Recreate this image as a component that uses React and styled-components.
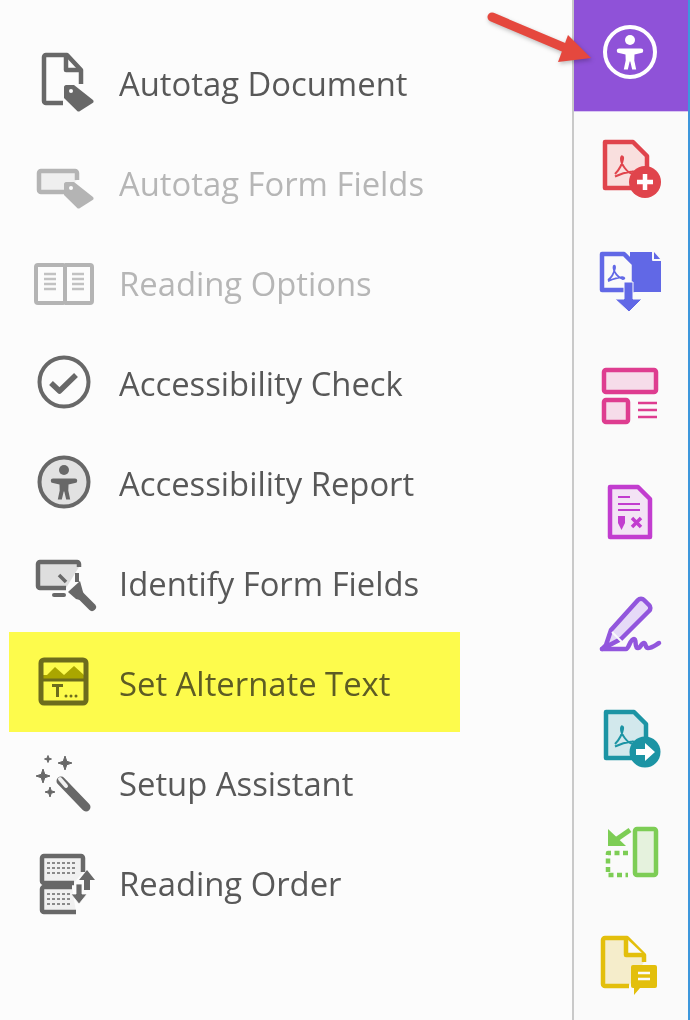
import React from 'react'
import styled, { createGlobalStyle } from 'styled-components'

const GlobalStyle = createGlobalStyle`
  html, body { margin: 0; padding: 0; background: #fcfcfc; }
`

// the reference is an upscaled capture, everything is slightly soft
const Page = styled.div`
  position: relative;
  display: flex;
  width: 690px;
  height: 1020px;
  overflow: hidden;
  background: #fcfcfc;
  font-family: "Open Sans", "Noto Sans", sans-serif;
  filter: blur(0.45px);
`

const Menu = styled.ul`
  flex: 1;
  list-style: none;
  margin: 0;
  padding: 32px 112px 0 9px;
`

const MenuRow = styled.li`
  display: flex;
  align-items: center;
  gap: 19px;
  height: 100px;
  box-sizing: border-box;
  padding: 2px 0 0 21px;
  background: ${(p) => (p.$highlight ? '#fdfb4c' : 'transparent')};
  color: ${(p) => (p.$disabled ? '#b6b6b6' : p.$highlight ? '#5d5c24' : '#585858')};
  font-size: 32.8px;
  white-space: nowrap;
`

const Rail = styled.nav`
  flex: none;
  width: 114px;
  border-left: 2px solid #c9c9c9;
  border-right: 2px solid #3d97dc;
  background: #fafafa;
`

const RailTab = styled.div`
  display: flex;
  align-items: center;
  justify-content: center;
  height: 114px;
`

const ActiveTab = styled(RailTab)`
  height: 112px;
  box-sizing: border-box;
  padding-bottom: 6px;
  background: #8f52d8;
  border-bottom: 1px solid #d9c6f2;
`

const Svg = styled.svg`
  display: block;
  flex: none;
  width: 70px;
  height: 70px;
  stroke-linejoin: round;
`

const Arrow = styled.svg`
  position: absolute;
  left: 480px;
  top: 5px;
  width: 120px;
  height: 70px;
  filter: drop-shadow(1px 2px 2px rgba(0, 0, 0, 0.25));
`

const Icon = ({ children }) => <Svg viewBox="0 0 70 70">{children}</Svg>

const GRAY = '#686868'
const LIGHT = '#b4b4b4'

const Figure = ({ color }) => (
  <g fill={color}>
    <circle cx="34" cy="22" r="5" />
    <path d="M23 30.5h22a2 2 0 0 1 0 4.500l-6.500 1.500-.2 6 1.900 9h-4l-1.900-8h-.6l-1.900 8h-4l1.900-9-.2-6-6.500-1.500a2 2 0 0 1 0-4.500z" />
  </g>
)

const Tag = ({ color, y }) => (
  <g transform={`translate(0 ${y})`}>
    <path d="M36 0h8l19 15c.8.800.8 2 0 2.800L50 26c-.8.800-2 .800-2.800 0L34 13V2c0-1 1-2 2-2z" fill={color} />
    <circle cx="41" cy="6" r="2" fill="#fcfcfc" />
  </g>
)

const AutotagDocIcon = () => (
  <Icon>
    <path d="M33 55H16a2 2 0 0 1-2-2V9a2 2 0 0 1 2-2h21l14 15v14" fill="none" stroke={GRAY} strokeWidth="4.500" />
    <path d="M36 7v15h15" fill="none" stroke={GRAY} strokeWidth="4.500" />
    <Tag color={GRAY} y={37} />
  </Icon>
)

const AutotagFormIcon = () => (
  <Icon>
    <path d="M34 44H11a2 2 0 0 1-2-2V25a2 2 0 0 1 2-2h34a2 2 0 0 1 2 2v7" fill="#efefef" stroke={LIGHT} strokeWidth="4.500" />
    <Tag color={LIGHT} y={34} />
  </Icon>
)

const ReadingOptionsIcon = () => (
  <Icon>
    <path d="M33 17H8a2 2 0 0 0-2 2v34a2 2 0 0 0 2 2h25a2 2 0 0 0 2-2V19a2 2 0 0 0-2-2z" fill="none" stroke={LIGHT} strokeWidth="4" />
    <path d="M35 17h25a2 2 0 0 1 2 2v34a2 2 0 0 1-2 2H35" fill="none" stroke={LIGHT} strokeWidth="4" />
    <path d="M14 26h12M14 31h12M14 36h12M14 41h12M42 26h12M42 31h12M42 36h12M42 41h12" stroke="#c2c2c2" strokeWidth="2.500" />
  </Icon>
)

const CheckIcon = () => (
  <Icon>
    <circle cx="34" cy="34" r="24.500" fill="none" stroke={GRAY} strokeWidth="4" />
    <path d="M21 35l8.500 8L46 27" fill="none" stroke={GRAY} strokeWidth="5.500" />
  </Icon>
)

const ReportIcon = () => (
  <Icon>
    <circle cx="34" cy="34" r="24.500" fill="#e2e2e2" stroke={GRAY} strokeWidth="4" />
    <Figure color={GRAY} />
  </Icon>
)

const IdentifyIcon = () => (
  <Icon>
    <path d="M36 40H10a2 2 0 0 1-2-2V16a2 2 0 0 1 2-2h37a2 2 0 0 1 2 2v3" fill="#dedede" stroke={GRAY} strokeWidth="4.500" />
    <path d="M47 25v9" stroke={GRAY} strokeWidth="4" />
    <path d="M24 47h10" stroke={GRAY} strokeWidth="4" strokeLinecap="round" />
    <path d="M29 27l7 7" stroke={GRAY} strokeWidth="3.500" />
    <path d="M38 44l12-11 3 11 1 4-4 4-4-1z" fill={GRAY} />
    <path d="M50 47l12 12" stroke={GRAY} strokeWidth="8" strokeLinecap="round" />
  </Icon>
)

const AltTextIcon = () => (
  <Icon>
    <path d="M13 31v-4h4l8-8 9 8 10-9 10 9v4z" fill="#aaa600" />
    <rect x="11" y="12" width="45" height="43" rx="3" fill="none" stroke="#6d6c1d" strokeWidth="5" />
    <path d="M13 32h41" stroke="#6d6c1d" strokeWidth="3" />
    <path d="M22 36h11v3h-4v10h-3V39h-4z" fill="#6d6c1d" />
    <g fill="#6d6c1d">
      <circle cx="36" cy="48" r="1.500" />
      <circle cx="41" cy="48" r="1.500" />
      <circle cx="46" cy="48" r="1.500" />
    </g>
  </Icon>
)

const Sparkle = ({ x, y, s }) => (
  <path d={`M${x} ${y - s}l${s * 0.25} ${s * 0.75} ${s * 0.75} ${s * 0.25} ${-s * 0.75} ${s * 0.25} ${-s * 0.25} ${s * 0.75} ${-s * 0.25} ${-s * 0.75} ${-s * 0.75} ${-s * 0.25} ${s * 0.75} ${-s * 0.25}z`} fill={GRAY} stroke={GRAY} />
)

const WandIcon = () => (
  <Icon>
    <Sparkle x={35} y={15} s={7} />
    <Sparkle x={13} y={28} s={7} />
    <Sparkle x={20} y={44} s={5} />
    <Sparkle x={18} y={11} s={3.500} />
    <path d="M31 33l25 26" stroke={GRAY} strokeWidth="9" strokeLinecap="round" />
    <path d="M30 31l6 7" stroke="#f2f2f2" strokeWidth="4" strokeLinecap="round" />
  </Icon>
)

const Keys = ({ x, y, w }) => (
  <g stroke="#8a8a8a" strokeWidth="1.800" strokeDasharray="3 2">
    <path d={`M${x} ${y}h${w}M${x} ${y + 5}h${w}M${x} ${y + 10}h${w}`} />
  </g>
)

const ReadingOrderIcon = () => (
  <Icon>
    <path d="M44 35H14a2 2 0 0 1-2-2V10a2 2 0 0 1 2-2h37a2 2 0 0 1 2 2v14" fill="#f0f0f0" stroke={GRAY} strokeWidth="4.500" />
    <path d="M46 64H14a2 2 0 0 1-2-2V41a2 2 0 0 1 2-2h28" fill="#f0f0f0" stroke={GRAY} strokeWidth="4.500" />
    <Keys x={17} y={15} w={30} />
    <Keys x={17} y={46} w={24} />
    <path d="M57 22l8 10h-5v10h-6V32h-5z" fill={GRAY} />
    <path d="M46 36h6v10h5l-8 10-8-10h5z" fill={GRAY} stroke="#fcfcfc" strokeWidth="0.800" />
  </Icon>
)

const pdfMark = 'M19 40c3-3 7-9 8-15 .5-3-2-4-2 0 0 5 6 14 12 15 4 .5 3-3-1-2.500-5 .5-11 2-17 5'

const AccessIcon = () => (
  <Icon>
    <circle cx="34" cy="34" r="25" fill="none" stroke="#fff" strokeWidth="4" />
    <Figure color="#fff" />
  </Icon>
)

const CreatePdfIcon = () => (
  <Icon>
    <path d="M9 8h28l14 14v32H9z" fill="#f9dfde" stroke="#e0444c" strokeWidth="4.500" />
    <path d={pdfMark} fill="none" stroke="#e0444c" strokeWidth="2" />
    <circle cx="49" cy="48" r="16" fill="#e0444c" />
    <path d="M49 40v16M41 48h16" stroke="#fff" strokeWidth="4.500" />
  </Icon>
)

const CombineIcon = () => (
  <Icon>
    <path d="M34 4h24l7 8v32H34z" fill="#6168e6" />
    <path d="M57 4v8h8" fill="none" stroke="#fafafa" strokeWidth="2" />
    <path d="M6 6h22l10 10v26H6z" fill="#fafafa" stroke="#6168e6" strokeWidth="4.500" />
    <path d="M12 32c3-2 6-7 7-12 .3-3-1.500-3-1.500 0 0 4 5 10 9 11 3 .3 2-2-.5-1.800-4 .3-8 1.500-14 4" fill="none" stroke="#6168e6" strokeWidth="1.800" />
    <path d="M28 34h9v17h9L33 64 19 51h9z" fill="#6168e6" stroke="#fafafa" strokeWidth="1" />
  </Icon>
)

const OrganizeIcon = () => (
  <Icon>
    <g fill="#f6dcea" stroke="#de3d90" strokeWidth="4.500">
      <rect x="8" y="8" width="52" height="22" rx="2" />
      <rect x="8" y="38" width="24" height="22" rx="2" />
    </g>
    <path d="M42 41h19M42 48h19M42 55h19" stroke="#de3d90" strokeWidth="2.500" />
  </Icon>
)

const FormIcon = () => (
  <Icon>
    <path d="M14 11h28l12 12v38H14z" fill="#f3e3f5" stroke="#c23dcf" strokeWidth="4.500" />
    <path d="M22 21h12M22 28h22M22 34h22" stroke="#c23dcf" strokeWidth="2.200" />
    <path d="M22 40h7v7l-3.500 7-3.500-7z" fill="#c23dcf" />
    <path d="M36 42l9 9M45 42l-9 9" stroke="#c23dcf" strokeWidth="3.500" />
  </Icon>
)

const SignIcon = () => (
  <Icon>
    <path d="M42 10a4 4 0 0 1 6 0l5 5a4 4 0 0 1 0 6L25 49l-19 10 4-4 5-15z" fill="#e6daf7" stroke="#9256dd" strokeWidth="4.500" />
    <path d="M6 59h24c3 0 4-10 8-10 3 0 0 9 4 9 3 0 3-5 6-5 2 0 1 5 4 5 4 0 6-2 11-5" fill="none" stroke="#9256dd" strokeWidth="4.500" strokeLinecap="round" />
    <path d="M16 42l11 11" stroke="#fafafa" strokeWidth="2" />
  </Icon>
)

const ExportIcon = () => (
  <Icon>
    <path d="M10 8h28l12 12v34H10z" fill="#d2e8ec" stroke="#1c94a4" strokeWidth="4.500" />
    <path d={pdfMark} fill="none" stroke="#1c94a4" strokeWidth="2" />
    <circle cx="49" cy="48" r="15.500" fill="#1c94a4" />
    <path d="M40 45h9v-6l10 9-10 9v-6h-9z" fill="#fff" />
  </Icon>
)

const ReplaceIcon = () => (
  <Icon>
    <rect x="39" y="11" width="21" height="46" rx="2" fill="#e5f2dd" stroke="#7dcd55" strokeWidth="4.500" />
    <path d="M32 35H12v22h20" fill="none" stroke="#7dcd55" strokeWidth="4.500" strokeDasharray="5 3.500" />
    <path d="M34 12L21 21" stroke="#7dcd55" strokeWidth="5" />
    <path d="M12 11v17h18z" fill="#7dcd55" />
  </Icon>
)

const CommentIcon = () => (
  <Icon>
    <path d="M33 54H9a2 2 0 0 1-2-2V8a2 2 0 0 1 2-2h22l17 17v7" fill="#f5edcb" stroke="#e3bf0c" strokeWidth="4.500" />
    <path d="M30 6v17h18" fill="#fafafa" stroke="#e3bf0c" strokeWidth="4.500" />
    <path d="M37 33h22a2 2 0 0 1 2 2v19a2 2 0 0 1-2 2H44l-6 7v-7h-1a2 2 0 0 1-2-2V35a2 2 0 0 1 2-2z" fill="#e3bf0c" />
    <path d="M42 41h12M42 47h12" stroke="#fafafa" strokeWidth="2.500" />
  </Icon>
)

const menuItems = [
  { label: 'Autotag Document', icon: AutotagDocIcon },
  { label: 'Autotag Form Fields', icon: AutotagFormIcon, disabled: true },
  { label: 'Reading Options', icon: ReadingOptionsIcon, disabled: true },
  { label: 'Accessibility Check', icon: CheckIcon },
  { label: 'Accessibility Report', icon: ReportIcon },
  { label: 'Identify Form Fields', icon: IdentifyIcon },
  { label: 'Set Alternate Text', icon: AltTextIcon, highlight: true },
  { label: 'Setup Assistant', icon: WandIcon },
  { label: 'Reading Order', icon: ReadingOrderIcon },
]

const railIcons = [CreatePdfIcon, CombineIcon, OrganizeIcon, FormIcon, SignIcon, ExportIcon, ReplaceIcon, CommentIcon]

const App = () => {
  return (
    <Page>
      <GlobalStyle />
      <Menu>
        {menuItems.map(({ label, icon: ItemIcon, disabled, highlight }) => (
          <MenuRow key={label} $disabled={disabled} $highlight={highlight}>
            <ItemIcon />
            <span>{label}</span>
          </MenuRow>
        ))}
      </Menu>
      <Rail>
        <ActiveTab>
          <AccessIcon />
        </ActiveTab>
        {railIcons.map((RailIcon, i) => (
          <RailTab key={i}>
            <RailIcon />
          </RailTab>
        ))}
      </Rail>
      <Arrow viewBox="0 0 120 70">
        <path d="M12 12l78 33" stroke="#e5483e" strokeWidth="9" strokeLinecap="round" />
        <path d="M88 30l23 23-33 4z" fill="#e5483e" />
      </Arrow>
    </Page>
  )
}

export default App
